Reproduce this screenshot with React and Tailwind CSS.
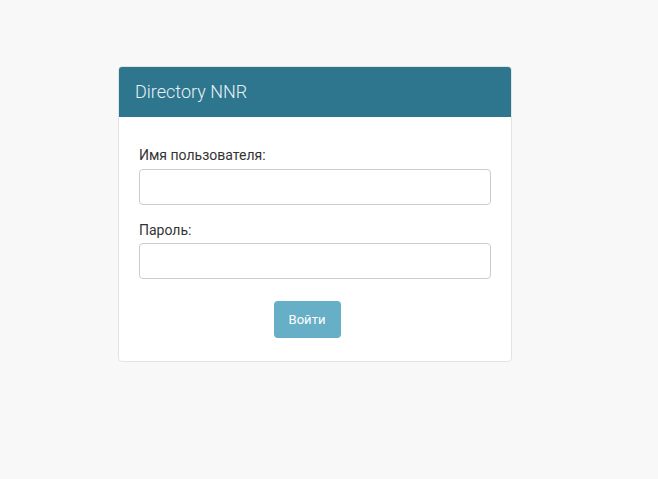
import React from 'react';

function LoginCard() {
    return (
        <div className="w-[394px] bg-white border border-[#e3e3e3] rounded-[4px] overflow-hidden">
            <div className="h-[50px] bg-[#2e758e] px-[16px] flex items-center">
                <h1 className="text-[18px] font-light text-[#e6f2f6] leading-none">Directory NNR</h1>
            </div>
            <form className="px-[20px] pt-[28px] pb-[23px]" onSubmit={(e) => e.preventDefault()}>
                <label className="block text-[14px] leading-[20px] text-[#333]">Имя пользователя:</label>
                <input type="text" className="mt-[4px] block w-full h-[36px] border border-[#cccccc] rounded-[4px] px-3 outline-none" />
                <label className="block mt-[15px] text-[14px] leading-[20px] text-[#333]">Пароль:</label>
                <input type="password" className="mt-[3px] block w-full h-[36px] border border-[#cccccc] rounded-[4px] px-3 outline-none" />
                <div className="mt-[22px] flex justify-center pr-[16px]">
                    <button type="submit" className="w-[67px] h-[37px] rounded-[4px] bg-[#67aec7] text-white text-[13px]">
                        Войти
                    </button>
                </div>
            </form>
        </div>
    );
}

export default function App() {
    return (
        <div className="min-h-screen bg-[#f8f8f8] pt-[66px] pl-[118px]" style={{ fontFamily: 'Roboto, "Liberation Sans", sans-serif' }}>
            <LoginCard />
        </div>
    );
}
